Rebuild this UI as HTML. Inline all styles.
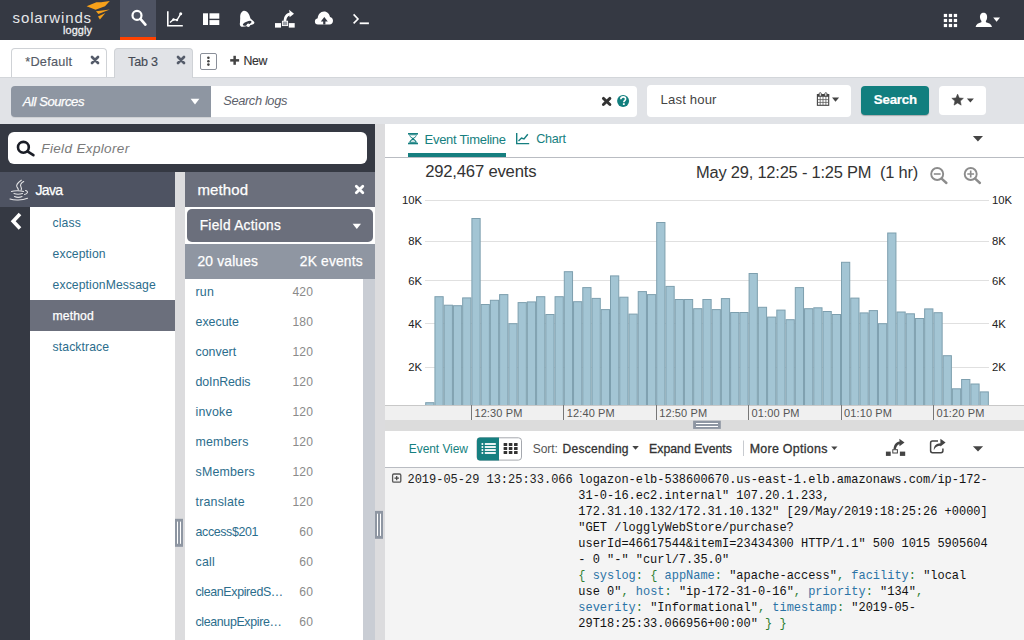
<!DOCTYPE html>
<html><head><meta charset="utf-8">
<style>
*{box-sizing:border-box;margin:0;padding:0}
html,body{width:1024px;height:640px;overflow:hidden;background:#fff;font-family:"Liberation Sans",sans-serif;color:#333}
.a{position:absolute}
.t{position:absolute;white-space:pre;line-height:1}
svg{position:absolute;overflow:visible}
</style></head><body>
<div class="a" style="left:0;top:0;width:1024px;height:40px;background:#353943"></div>
<div class="t" style="left:12.6px;top:9.8px;font-size:15px;color:#e6e7ea;letter-spacing:0.85px">solarwinds</div>
<div class="t" style="left:63px;top:24.5px;font-size:10.9px;color:#eeeff1;letter-spacing:0.1px;-webkit-text-stroke:0.3px #eeeff1">loggly</div>
<div class="a" style="left:120px;top:0;width:36px;height:37px;background:#4e5362"></div>
<div class="a" style="left:120px;top:37px;width:36px;height:3px;background:#ff4200"></div>
<div class="a" style="left:11px;top:48px;width:96px;height:30px;background:#fff;border:1px solid #cfd2d6;border-bottom:none;border-radius:4px 4px 0 0"></div>
<div class="a" style="left:200px;top:53px;width:17px;height:17px;border:1px solid #8a8f99;border-radius:2px;background:#fff"></div>
<div class="a" style="left:0;top:77px;width:1024px;height:47px;background:#e1e3e7;border-top:1px solid #d3d6da"></div>
<div class="a" style="left:114px;top:48px;width:79px;height:30px;background:#e1e3e7;border:1px solid #cfd2d6;border-bottom:none;border-radius:4px 4px 0 0"></div>
<div class="a" style="left:11px;top:85.5px;width:200px;height:31px;background:#8e96a2;border-radius:4px 0 0 4px;box-shadow:0 1px 0 rgba(0,0,0,.08)"></div>
<div class="a" style="left:211px;top:85.5px;width:426px;height:31px;background:#fff;border-radius:0 4px 4px 0"></div>
<div class="a" style="left:647px;top:84.5px;width:204px;height:32px;background:#fff;border-radius:4px"></div>
<div class="a" style="left:861px;top:86px;width:68px;height:29px;background:#127f7f;border-radius:4px;box-shadow:0 1px 1px rgba(0,0,0,.25)"></div>
<div class="a" style="left:939px;top:86px;width:47px;height:29px;background:#fff;border-radius:4px"></div>
<div class="a" style="left:0;top:124px;width:375px;height:516px;background:#353943"></div>
<div class="a" style="left:8px;top:132px;width:359px;height:31.5px;background:#fff;border-radius:6px"></div>
<div class="a" style="left:0;top:172px;width:175px;height:35px;background:#4e5362"></div>
<div class="a" style="left:30px;top:207px;width:145px;height:433px;background:#fff"></div>
<div class="a" style="left:30px;top:300px;width:145px;height:31px;background:#6b6f7c"></div>
<div class="t" style="left:52.6px;top:216.67px;font-size:12.2px;letter-spacing:0.1px;color:#2b6d8c">class</div>
<div class="t" style="left:52.6px;top:247.67px;font-size:12.2px;letter-spacing:0.1px;color:#2b6d8c">exception</div>
<div class="t" style="left:52.6px;top:278.67px;font-size:12.2px;letter-spacing:0.1px;color:#2b6d8c">exceptionMessage</div>
<div class="t" style="left:52.6px;top:309.67px;font-size:12.2px;letter-spacing:0.1px;color:#fff;-webkit-text-stroke:0.25px #fff">method</div>
<div class="t" style="left:52.6px;top:340.67px;font-size:12.2px;letter-spacing:0.1px;color:#2b6d8c">stacktrace</div>
<div class="a" style="left:175px;top:172px;width:10px;height:468px;background:#dcdcde"></div>
<div class="a" style="left:185px;top:172px;width:190px;height:34.5px;background:#6b6f7c"></div>
<div class="a" style="left:185px;top:206.5px;width:190px;height:38px;background:#fff"></div>
<div class="a" style="left:187px;top:209px;width:186px;height:32.8px;background:#6b6f7c;border-radius:5px"></div>
<div class="a" style="left:185px;top:244.3px;width:190px;height:34.3px;background:#8f96a2"></div>
<div class="a" style="left:185px;top:278.6px;width:178px;height:362px;background:#fff"></div>
<div class="a" style="left:363px;top:278.6px;width:12px;height:362px;background:#c9cdd4"></div>
<div class="t" style="left:195.5px;top:286.30px;font-size:12.4px;letter-spacing:0.2px;color:#2b6d8c">run</div>
<div class="t" style="left:253px;width:60px;text-align:right;top:285.66px;font-size:12.1px;letter-spacing:0.1px;color:#8a8a8a">420</div>
<div class="t" style="left:195.5px;top:316.30px;font-size:12.4px;letter-spacing:0.0px;color:#2b6d8c">execute</div>
<div class="t" style="left:253px;width:60px;text-align:right;top:315.66px;font-size:12.1px;letter-spacing:0.1px;color:#8a8a8a">180</div>
<div class="t" style="left:195.5px;top:346.30px;font-size:12.4px;letter-spacing:0.0px;color:#2b6d8c">convert</div>
<div class="t" style="left:253px;width:60px;text-align:right;top:345.66px;font-size:12.1px;letter-spacing:0.1px;color:#8a8a8a">120</div>
<div class="t" style="left:195.5px;top:376.30px;font-size:12.4px;letter-spacing:-0.1px;color:#2b6d8c">doInRedis</div>
<div class="t" style="left:253px;width:60px;text-align:right;top:375.66px;font-size:12.1px;letter-spacing:0.1px;color:#8a8a8a">120</div>
<div class="t" style="left:195.5px;top:406.30px;font-size:12.4px;letter-spacing:0.2px;color:#2b6d8c">invoke</div>
<div class="t" style="left:253px;width:60px;text-align:right;top:405.66px;font-size:12.1px;letter-spacing:0.1px;color:#8a8a8a">120</div>
<div class="t" style="left:195.5px;top:436.30px;font-size:12.4px;letter-spacing:0.2px;color:#2b6d8c">members</div>
<div class="t" style="left:253px;width:60px;text-align:right;top:435.66px;font-size:12.1px;letter-spacing:0.1px;color:#8a8a8a">120</div>
<div class="t" style="left:195.5px;top:466.30px;font-size:12.4px;letter-spacing:0.2px;color:#2b6d8c">sMembers</div>
<div class="t" style="left:253px;width:60px;text-align:right;top:465.66px;font-size:12.1px;letter-spacing:0.1px;color:#8a8a8a">120</div>
<div class="t" style="left:195.5px;top:496.30px;font-size:12.4px;letter-spacing:0.2px;color:#2b6d8c">translate</div>
<div class="t" style="left:253px;width:60px;text-align:right;top:495.66px;font-size:12.1px;letter-spacing:0.1px;color:#8a8a8a">120</div>
<div class="t" style="left:195.5px;top:526.30px;font-size:12.4px;letter-spacing:-0.35px;color:#2b6d8c">access$201</div>
<div class="t" style="left:253px;width:60px;text-align:right;top:525.66px;font-size:12.1px;letter-spacing:0.1px;color:#8a8a8a">60</div>
<div class="t" style="left:195.5px;top:556.30px;font-size:12.4px;letter-spacing:0.2px;color:#2b6d8c">call</div>
<div class="t" style="left:253px;width:60px;text-align:right;top:555.66px;font-size:12.1px;letter-spacing:0.1px;color:#8a8a8a">60</div>
<div class="t" style="left:195.5px;top:586.30px;font-size:12.4px;letter-spacing:-0.35px;color:#2b6d8c">cleanExpiredS…</div>
<div class="t" style="left:253px;width:60px;text-align:right;top:585.66px;font-size:12.1px;letter-spacing:0.1px;color:#8a8a8a">60</div>
<div class="t" style="left:195.5px;top:616.30px;font-size:12.4px;letter-spacing:-0.35px;color:#2b6d8c">cleanupExpire…</div>
<div class="t" style="left:253px;width:60px;text-align:right;top:615.66px;font-size:12.1px;letter-spacing:0.1px;color:#8a8a8a">60</div>
<div class="a" style="left:375px;top:124px;width:10px;height:516px;background:#dcdcde"></div>
<div class="a" style="left:385px;top:124px;width:639px;height:34px;background:#fff;border-bottom:1px solid #b9bcc2"></div>
<div class="a" style="left:408px;top:153px;width:98px;height:4px;background:#167f80"></div>
<div class="a" style="left:385px;top:158px;width:639px;height:247px;background:#fff"></div>
<svg class="a" style="left:0;top:0" width="1024" height="640" viewBox="0 0 1024 640">
<rect x="425" y="200" width="564" height="1" fill="#e0e0e0"/>
<rect x="425" y="241" width="564" height="1" fill="#e0e0e0"/>
<rect x="425" y="280" width="564" height="1" fill="#e0e0e0"/>
<rect x="425" y="323" width="564" height="1" fill="#e0e0e0"/>
<rect x="425" y="367" width="564" height="1" fill="#e0e0e0"/>
<rect x="425.70" y="402.70" width="8.24" height="2.80" fill="#a3c5d4" stroke="#7d9fae" stroke-width="1"/>
<rect x="434.94" y="296.70" width="8.24" height="108.80" fill="#a3c5d4" stroke="#7d9fae" stroke-width="1"/>
<rect x="444.18" y="305.20" width="8.24" height="100.30" fill="#a3c5d4" stroke="#7d9fae" stroke-width="1"/>
<rect x="453.42" y="305.70" width="8.24" height="99.80" fill="#a3c5d4" stroke="#7d9fae" stroke-width="1"/>
<rect x="462.66" y="297.90" width="8.24" height="107.60" fill="#a3c5d4" stroke="#7d9fae" stroke-width="1"/>
<rect x="471.90" y="218.50" width="8.24" height="187.00" fill="#a3c5d4" stroke="#7d9fae" stroke-width="1"/>
<rect x="481.14" y="304.50" width="8.24" height="101.00" fill="#a3c5d4" stroke="#7d9fae" stroke-width="1"/>
<rect x="490.38" y="300.30" width="8.24" height="105.20" fill="#a3c5d4" stroke="#7d9fae" stroke-width="1"/>
<rect x="499.62" y="294.60" width="8.24" height="110.90" fill="#a3c5d4" stroke="#7d9fae" stroke-width="1"/>
<rect x="508.86" y="323.70" width="8.24" height="81.80" fill="#a3c5d4" stroke="#7d9fae" stroke-width="1"/>
<rect x="518.10" y="302.60" width="8.24" height="102.90" fill="#a3c5d4" stroke="#7d9fae" stroke-width="1"/>
<rect x="527.34" y="301.90" width="8.24" height="103.60" fill="#a3c5d4" stroke="#7d9fae" stroke-width="1"/>
<rect x="536.58" y="296.70" width="8.24" height="108.80" fill="#a3c5d4" stroke="#7d9fae" stroke-width="1"/>
<rect x="545.82" y="314.50" width="8.24" height="91.00" fill="#a3c5d4" stroke="#7d9fae" stroke-width="1"/>
<rect x="555.06" y="296.70" width="8.24" height="108.80" fill="#a3c5d4" stroke="#7d9fae" stroke-width="1"/>
<rect x="564.30" y="271.70" width="8.24" height="133.80" fill="#a3c5d4" stroke="#7d9fae" stroke-width="1"/>
<rect x="573.54" y="301.70" width="8.24" height="103.80" fill="#a3c5d4" stroke="#7d9fae" stroke-width="1"/>
<rect x="582.78" y="287.60" width="8.24" height="117.90" fill="#a3c5d4" stroke="#7d9fae" stroke-width="1"/>
<rect x="592.02" y="298.40" width="8.24" height="107.10" fill="#a3c5d4" stroke="#7d9fae" stroke-width="1"/>
<rect x="601.26" y="309.60" width="8.24" height="95.90" fill="#a3c5d4" stroke="#7d9fae" stroke-width="1"/>
<rect x="610.50" y="275.90" width="8.24" height="129.60" fill="#a3c5d4" stroke="#7d9fae" stroke-width="1"/>
<rect x="619.74" y="297.20" width="8.24" height="108.30" fill="#a3c5d4" stroke="#7d9fae" stroke-width="1"/>
<rect x="628.98" y="314.10" width="8.24" height="91.40" fill="#a3c5d4" stroke="#7d9fae" stroke-width="1"/>
<rect x="638.22" y="291.60" width="8.24" height="113.90" fill="#a3c5d4" stroke="#7d9fae" stroke-width="1"/>
<rect x="647.46" y="294.60" width="8.24" height="110.90" fill="#a3c5d4" stroke="#7d9fae" stroke-width="1"/>
<rect x="656.70" y="222.50" width="8.24" height="183.00" fill="#a3c5d4" stroke="#7d9fae" stroke-width="1"/>
<rect x="665.94" y="286.40" width="8.24" height="119.10" fill="#a3c5d4" stroke="#7d9fae" stroke-width="1"/>
<rect x="675.18" y="299.50" width="8.24" height="106.00" fill="#a3c5d4" stroke="#7d9fae" stroke-width="1"/>
<rect x="684.42" y="299.50" width="8.24" height="106.00" fill="#a3c5d4" stroke="#7d9fae" stroke-width="1"/>
<rect x="693.66" y="308.70" width="8.24" height="96.80" fill="#a3c5d4" stroke="#7d9fae" stroke-width="1"/>
<rect x="702.90" y="299.50" width="8.24" height="106.00" fill="#a3c5d4" stroke="#7d9fae" stroke-width="1"/>
<rect x="712.14" y="309.60" width="8.24" height="95.90" fill="#a3c5d4" stroke="#7d9fae" stroke-width="1"/>
<rect x="721.38" y="298.60" width="8.24" height="106.90" fill="#a3c5d4" stroke="#7d9fae" stroke-width="1"/>
<rect x="730.62" y="312.50" width="8.24" height="93.00" fill="#a3c5d4" stroke="#7d9fae" stroke-width="1"/>
<rect x="739.86" y="312.50" width="8.24" height="93.00" fill="#a3c5d4" stroke="#7d9fae" stroke-width="1"/>
<rect x="749.10" y="273.50" width="8.24" height="132.00" fill="#a3c5d4" stroke="#7d9fae" stroke-width="1"/>
<rect x="758.34" y="307.30" width="8.24" height="98.20" fill="#a3c5d4" stroke="#7d9fae" stroke-width="1"/>
<rect x="767.58" y="317.10" width="8.24" height="88.40" fill="#a3c5d4" stroke="#7d9fae" stroke-width="1"/>
<rect x="776.82" y="310.10" width="8.24" height="95.40" fill="#a3c5d4" stroke="#7d9fae" stroke-width="1"/>
<rect x="786.06" y="319.70" width="8.24" height="85.80" fill="#a3c5d4" stroke="#7d9fae" stroke-width="1"/>
<rect x="795.30" y="287.60" width="8.24" height="117.90" fill="#a3c5d4" stroke="#7d9fae" stroke-width="1"/>
<rect x="804.54" y="308.70" width="8.24" height="96.80" fill="#a3c5d4" stroke="#7d9fae" stroke-width="1"/>
<rect x="813.78" y="307.80" width="8.24" height="97.70" fill="#a3c5d4" stroke="#7d9fae" stroke-width="1"/>
<rect x="823.02" y="311.50" width="8.24" height="94.00" fill="#a3c5d4" stroke="#7d9fae" stroke-width="1"/>
<rect x="832.26" y="314.50" width="8.24" height="91.00" fill="#a3c5d4" stroke="#7d9fae" stroke-width="1"/>
<rect x="841.50" y="262.30" width="8.24" height="143.20" fill="#a3c5d4" stroke="#7d9fae" stroke-width="1"/>
<rect x="850.74" y="298.10" width="8.24" height="107.40" fill="#a3c5d4" stroke="#7d9fae" stroke-width="1"/>
<rect x="859.98" y="312.90" width="8.24" height="92.60" fill="#a3c5d4" stroke="#7d9fae" stroke-width="1"/>
<rect x="869.22" y="310.60" width="8.24" height="94.90" fill="#a3c5d4" stroke="#7d9fae" stroke-width="1"/>
<rect x="878.46" y="323.70" width="8.24" height="81.80" fill="#a3c5d4" stroke="#7d9fae" stroke-width="1"/>
<rect x="887.70" y="233.00" width="8.24" height="172.50" fill="#a3c5d4" stroke="#7d9fae" stroke-width="1"/>
<rect x="896.94" y="312.00" width="8.24" height="93.50" fill="#a3c5d4" stroke="#7d9fae" stroke-width="1"/>
<rect x="906.18" y="313.80" width="8.24" height="91.70" fill="#a3c5d4" stroke="#7d9fae" stroke-width="1"/>
<rect x="915.42" y="318.50" width="8.24" height="87.00" fill="#a3c5d4" stroke="#7d9fae" stroke-width="1"/>
<rect x="924.66" y="308.90" width="8.24" height="96.60" fill="#a3c5d4" stroke="#7d9fae" stroke-width="1"/>
<rect x="933.90" y="312.70" width="8.24" height="92.80" fill="#a3c5d4" stroke="#7d9fae" stroke-width="1"/>
<rect x="943.14" y="355.70" width="8.24" height="49.80" fill="#a3c5d4" stroke="#7d9fae" stroke-width="1"/>
<rect x="952.38" y="388.80" width="8.24" height="16.70" fill="#a3c5d4" stroke="#7d9fae" stroke-width="1"/>
<rect x="961.62" y="379.50" width="8.24" height="26.00" fill="#a3c5d4" stroke="#7d9fae" stroke-width="1"/>
<rect x="970.86" y="384.00" width="8.24" height="21.50" fill="#a3c5d4" stroke="#7d9fae" stroke-width="1"/>
<rect x="980.10" y="391.90" width="8.24" height="13.60" fill="#a3c5d4" stroke="#7d9fae" stroke-width="1"/>
</svg>
<div class="t" style="left:372px;width:50px;text-align:right;top:194.7px;font-size:11.3px;color:#222">10K</div>
<div class="t" style="left:992px;top:194.7px;font-size:11.3px;color:#222">10K</div>
<div class="t" style="left:372px;width:50px;text-align:right;top:235.7px;font-size:11.3px;color:#222">8K</div>
<div class="t" style="left:992px;top:235.7px;font-size:11.3px;color:#222">8K</div>
<div class="t" style="left:372px;width:50px;text-align:right;top:275.7px;font-size:11.3px;color:#222">6K</div>
<div class="t" style="left:992px;top:275.7px;font-size:11.3px;color:#222">6K</div>
<div class="t" style="left:372px;width:50px;text-align:right;top:318.7px;font-size:11.3px;color:#222">4K</div>
<div class="t" style="left:992px;top:318.7px;font-size:11.3px;color:#222">4K</div>
<div class="t" style="left:372px;width:50px;text-align:right;top:361.7px;font-size:11.3px;color:#222">2K</div>
<div class="t" style="left:992px;top:361.7px;font-size:11.3px;color:#222">2K</div>
<div class="a" style="left:385px;top:405px;width:639px;height:15px;background:#f0f0f0;border-top:1px solid #c8c8c8"></div>
<div class="a" style="left:470.9px;top:405px;width:1px;height:15px;background:#777"></div>
<div class="t" style="left:474.4px;top:408px;font-size:11px;color:#555;letter-spacing:0.12px">12:30 PM</div>
<div class="a" style="left:563.3px;top:405px;width:1px;height:15px;background:#777"></div>
<div class="t" style="left:566.8px;top:408px;font-size:11px;color:#555;letter-spacing:0.12px">12:40 PM</div>
<div class="a" style="left:655.7px;top:405px;width:1px;height:15px;background:#777"></div>
<div class="t" style="left:659.2px;top:408px;font-size:11px;color:#555;letter-spacing:0.12px">12:50 PM</div>
<div class="a" style="left:748.1px;top:405px;width:1px;height:15px;background:#777"></div>
<div class="t" style="left:751.6px;top:408px;font-size:11px;color:#555;letter-spacing:0.12px">01:00 PM</div>
<div class="a" style="left:840.5px;top:405px;width:1px;height:15px;background:#777"></div>
<div class="t" style="left:844.0px;top:408px;font-size:11px;color:#555;letter-spacing:0.12px">01:10 PM</div>
<div class="a" style="left:932.9px;top:405px;width:1px;height:15px;background:#777"></div>
<div class="t" style="left:936.4px;top:408px;font-size:11px;color:#555;letter-spacing:0.12px">01:20 PM</div>
<div class="a" style="left:385px;top:420px;width:639px;height:11px;background:#dcdcdc"></div>
<div class="a" style="left:385px;top:431px;width:639px;height:37px;background:#fff;border-bottom:1px solid #b9bcc2"></div>
<div class="a" style="left:385px;top:468px;width:639px;height:172px;background:#f4f4f4"></div>
<div class="t" style="left:25.3px;top:55.93px;font-size:12.72px;letter-spacing:0.220px;color:#555a66;-webkit-text-stroke:0.15px #555a66">*Default</div>
<div class="t" style="left:128.1px;top:56.16px;font-size:12.57px;letter-spacing:-0.188px;color:#444a55;-webkit-text-stroke:0.15px #444a55">Tab 3</div>
<div class="t" style="left:243.4px;top:55.40px;font-size:12.29px;letter-spacing:-0.344px;color:#333;-webkit-text-stroke:0.15px #333">New</div>
<div class="t" style="left:22.8px;top:94.73px;font-size:13.08px;letter-spacing:-0.447px;font-style:italic;color:#fff;-webkit-text-stroke:0.25px #fff">All Sources</div>
<div class="t" style="left:223.2px;top:94.62px;font-size:12.85px;letter-spacing:-0.367px;font-style:italic;color:#5d616b">Search logs</div>
<div class="t" style="left:660.5px;top:92.79px;font-size:13.13px;letter-spacing:0.158px;color:#444">Last hour</div>
<div class="t" style="left:873.8px;top:92.97px;font-size:13.26px;letter-spacing:-0.189px;font-weight:bold;color:#fff;-webkit-text-stroke:0.2px #fff">Search</div>
<div class="t" style="left:41.3px;top:142.13px;font-size:13.55px;letter-spacing:0.333px;font-style:italic;color:#7a7a7a">Field Explorer</div>
<div class="t" style="left:35.4px;top:182.90px;font-size:14.05px;letter-spacing:-0.628px;color:#fff;-webkit-text-stroke:0.25px #fff">Java</div>
<div class="t" style="left:197.5px;top:182.04px;font-size:15.02px;letter-spacing:0.100px;color:#fff;-webkit-text-stroke:0.25px #fff">method</div>
<div class="t" style="left:199.7px;top:219.08px;font-size:13.73px;letter-spacing:0.282px;color:#fff;-webkit-text-stroke:0.25px #fff">Field Actions</div>
<div class="t" style="left:197.5px;top:255.21px;font-size:13.81px;letter-spacing:0.175px;color:#fff;-webkit-text-stroke:0.25px #fff">20 values</div>
<div class="t" style="left:299.8px;top:255.21px;font-size:13.81px;letter-spacing:0.185px;color:#fff;-webkit-text-stroke:0.25px #fff">2K events</div>
<div class="t" style="left:424.6px;top:133.00px;font-size:12.99px;letter-spacing:-0.291px;color:#167f80">Event Timeline</div>
<div class="t" style="left:536.2px;top:133.34px;font-size:12.59px;letter-spacing:-0.245px;color:#167f80">Chart</div>
<div class="t" style="left:425.2px;top:163.80px;font-size:16.66px;letter-spacing:-0.201px;color:#333">292,467 events</div>
<div class="t" style="left:696.0px;top:164.37px;font-size:16.46px;letter-spacing:-0.204px;color:#333">May 29, 12:25 - 1:25 PM  (1 hr)</div>
<div class="t" style="left:408.8px;top:442.63px;font-size:12.01px;letter-spacing:-0.069px;color:#167f80">Event View</div>
<div class="t" style="left:532.7px;top:442.83px;font-size:12.01px;letter-spacing:-0.042px;color:#555">Sort:</div>
<div class="t" style="left:562.6px;top:442.83px;font-size:12.01px;letter-spacing:0.285px;color:#333;-webkit-text-stroke:0.3px #333">Descending</div>
<div class="t" style="left:649.0px;top:442.60px;font-size:12.29px;letter-spacing:0.027px;color:#333;-webkit-text-stroke:0.3px #333">Expand Events</div>
<div class="t" style="left:749.7px;top:442.98px;font-size:12.43px;letter-spacing:0.281px;color:#333;-webkit-text-stroke:0.3px #333">More Options</div>
<div class="t" style="left:407.5px;top:471.5px;font-family:'Liberation Mono',monospace;font-size:11.97px;line-height:16px;color:#222">2019-05-29 13:25:33.066</div>
<div class="a" style="left:578.3px;top:471.5px;white-space:pre;font-family:'Liberation Mono',monospace;font-size:11.97px;line-height:16px;color:#111">logazon-elb-538600670.us-east-1.elb.amazonaws.com/ip-172-
31-0-16.ec2.internal" 107.20.1.233,
172.31.10.132/172.31.10.132" [29/May/2019:18:25:26 +0000]
"GET /logglyWebStore/purchase?
userId=46617544&amp;itemI=23434300 HTTP/1.1" 500 1015 5905604
- 0 "-" "curl/7.35.0"
<span style="color:#2f7f33">{ </span><span style="color:#2b73a6">syslog</span><span style="color:#2f7f33">: { </span><span style="color:#2b73a6">appName</span><span style="color:#2f7f33">: </span>"apache-access"<span style="color:#2f7f33">, </span><span style="color:#2b73a6">facility</span><span style="color:#2f7f33">: </span>"local
use 0"<span style="color:#2f7f33">, </span><span style="color:#2b73a6">host</span><span style="color:#2f7f33">: </span>"ip-172-31-0-16"<span style="color:#2f7f33">, </span><span style="color:#2b73a6">priority</span><span style="color:#2f7f33">: </span>"134"<span style="color:#2f7f33">,</span>
<span style="color:#2b73a6">severity</span><span style="color:#2f7f33">: </span>"Informational"<span style="color:#2f7f33">, </span><span style="color:#2b73a6">timestamp</span><span style="color:#2f7f33">: </span>"2019-05-
29T18:25:33.066956+00:00" <span style="color:#2f7f33">} }</span></div>
<!--ICONS-->
<svg class="a" style="left:0;top:0;pointer-events:none" width="1024" height="640" viewBox="0 0 1024 640">
<!-- logo flame -->
<g fill="#f7a11a">
<path d="M86.6 6.3 L96.4 2.3 L101 2.2 L109.8 1.1 L105 6.3 L95.6 9.8 Z"/>
<path d="M96 11.3 L109.8 9.4 L98.4 14.1 Z"/>
<path d="M98 16.4 L105.4 12.9 L99.9 19.5 Z"/>
</g>
<!-- nav icons -->
<g fill="none" stroke="#fff">
<circle cx="137" cy="15.4" r="4.5" stroke-width="2.2"/>
<path d="M140.4 18.9 L145.4 24.6" stroke-width="2.7" stroke-linecap="round"/>
<path d="M167.8 11.3 V25.8 H182.8" stroke-width="1.6"/>
<path d="M170 22.5 L173.5 19.5 L177 20 L180.7 13.8" stroke-width="1.4"/>
</g>
<g fill="#fff">
<circle cx="173.5" cy="19.5" r="1.2"/><circle cx="177" cy="20" r="1.2"/><circle cx="180.7" cy="13.8" r="1.5"/>
<rect x="203" y="13.3" width="5" height="11.7"/>
<rect x="209.5" y="13.3" width="9.8" height="5.4"/>
<rect x="209.5" y="20.1" width="9.8" height="4.9"/>
<!-- bell -->
<path d="M244 10.8 C241 11.5 240 14.5 240.2 18 L240 22.5 C239.5 24.5 240 26.8 242.5 26.8 C245 26.8 250 25.5 252.5 24.5 C254.5 23.8 255 22.5 253.8 21.5 L250.5 18.5 C249.3 14.5 248 11 244 10.8 Z"/>
<!-- pipeline -->
<rect x="275" y="23.1" width="6" height="4.5"/>
<rect x="288.8" y="23.1" width="5.9" height="4.5"/>
<path d="M283.6 21 C284 16 286 13.5 289.6 12.6 L289 9.8 L294 13.8 L289.6 17.2 L289.5 15.6 C287.5 16.3 286.5 18.2 286.2 21 Z"/>
<!-- cloud -->
<path d="M318 24.5 C315.8 24.5 314.9 23 314.9 21.4 C314.9 19.8 316 18.6 317.7 18.3 C317.9 14.8 320.5 11.5 324 11.5 C327.3 11.5 329.6 14 330 17 C331.9 17.2 333 18.8 333 20.8 C333 23 331.5 24.5 329.5 24.5 Z"/>
<!-- terminal -->
<rect x="359.7" y="22.4" width="9.2" height="1.8"/>
</g>
<rect x="282.4" y="21.2" width="5.2" height="4.4" fill="#9ca0a8" stroke="#fff" stroke-width="0.9"/>
<path d="M320.8 21.4 L324.3 17 L327.8 21.4 H325.4 V24.6 H323.2 V21.4 Z" fill="#353943"/>
<path d="M353.6 14.4 L358 19 L353.6 23.4" fill="none" stroke="#fff" stroke-width="1.6"/>
<ellipse cx="247.2" cy="23.3" rx="4.6" ry="1.7" transform="rotate(-22 247.2 23.3)" fill="#353943"/>
<circle cx="248.3" cy="25.3" r="1.7" fill="#fff"/>
<!-- right nav -->
<g fill="#fff">
<rect x="943.8" y="13.9" width="3.3" height="3.2"/><rect x="948.8" y="13.9" width="3.3" height="3.2"/><rect x="953.8" y="13.9" width="3.3" height="3.2"/>
<rect x="943.8" y="18.9" width="3.3" height="3.2"/><rect x="948.8" y="18.9" width="3.3" height="3.2"/><rect x="953.8" y="18.9" width="3.3" height="3.2"/>
<rect x="943.8" y="23.9" width="3.3" height="3.2"/><rect x="948.8" y="23.9" width="3.3" height="3.2"/><rect x="953.8" y="23.9" width="3.3" height="3.2"/>
<path d="M983.5 12.7 C980.8 12.7 979.8 15 980 17.5 C980.2 19.3 981 20.5 981.5 21 L981.3 22.2 C978.5 23 976 24 975.6 27 H992 C991.5 24 989 23 986 22.2 L985.8 21 C986.4 20.4 987 19.2 987.1 17.5 C987.3 15 986.3 12.7 983.5 12.7 Z"/>
<path d="M993.2 17.6 H1000 L996.6 21.8 Z"/>
</g>
<!-- tabs row -->
<g stroke="#555c6a" stroke-width="2.7" stroke-linecap="round">
<path d="M92 57 L98 63 M98 57 L92 63"/>
<path d="M178 57 L184 63 M184 57 L178 63"/>
</g>
<g fill="#444">
<circle cx="208.4" cy="57.8" r="1.3"/><circle cx="208.4" cy="61.2" r="1.3"/><circle cx="208.4" cy="64.6" r="1.3"/>
<rect x="230.2" y="59.1" width="8.9" height="2.5"/><rect x="233.4" y="55.8" width="2.5" height="9"/>
</g>
<!-- search band -->
<path d="M190.6 98.8 H199.4 L195 104.4 Z" fill="#fff"/>
<g stroke="#333" stroke-width="2.9" stroke-linecap="round"><path d="M603.4 98.4 L609.9 104.5 M609.9 98.4 L603.4 104.5"/></g>
<circle cx="623.1" cy="100.9" r="6" fill="#127f7e"/>
<path d="M620.8 99.3 C620.8 97.5 622 96.9 623.2 96.9 C624.6 96.9 625.6 97.7 625.6 99 C625.6 100.5 623.8 100.6 623.8 102.2" fill="none" stroke="#fff" stroke-width="1.6"/>
<rect x="622.9" y="103.2" width="1.8" height="1.8" fill="#fff"/>
<!-- calendar -->
<rect x="817.4" y="94.6" width="11.3" height="10.7" fill="#fff" stroke="#444" stroke-width="1.1"/>
<rect x="817" y="94.2" width="12.1" height="2.6" fill="#444"/>
<g stroke="#555" stroke-width="0.75"><path d="M820.2 96.8 V105.2 M823 96.8 V105.2 M825.9 96.8 V105.2 M817.4 99.6 H828.7 M817.4 102.4 H828.7"/></g>
<rect x="819.2" y="92.7" width="2.1" height="3.6" rx="1" fill="#fff" stroke="#444" stroke-width="0.9"/>
<rect x="824.8" y="92.7" width="2.1" height="3.6" rx="1" fill="#fff" stroke="#444" stroke-width="0.9"/>
<path d="M832 97.4 H839.1 L835.5 101.7 Z" fill="#444"/>
<!-- star -->
<path d="M957.60 94.10 L959.29 97.88 L963.40 98.31 L960.33 101.09 L961.19 105.14 L957.60 103.07 L954.01 105.14 L954.87 101.09 L951.80 98.31 L955.91 97.88 Z" fill="#444" stroke="#444" stroke-width="0.5" stroke-linejoin="round"/>
<path d="M966.9 98.5 H973.9 L970.4 102.4 Z" fill="#444"/>
<!-- field explorer search -->
<circle cx="23.4" cy="147.3" r="5.4" fill="none" stroke="#1a1d26" stroke-width="2.6"/>
<path d="M27.5 151.3 L33.4 155.2" stroke="#1a1d26" stroke-width="2.6" stroke-linecap="round"/>
<!-- java icon -->
<g fill="none" stroke="#e2e2e4" stroke-width="1.1" stroke-linecap="round">
<path d="M21.3 180.2 C18 182.5 15.5 184.5 17 187 C18 188.5 18.5 189 18.3 190"/>
<path d="M23.7 181.5 C21 183 19.8 185 21 187 C21.6 188 21.6 189 21.2 190"/>
<path d="M11.5 191.5 C14 190.5 21 190.7 23.5 191.5"/>
<path d="M14 193.5 C16 194.3 20 194.3 22.5 193.5"/>
<path d="M14.5 196.5 C16.5 197.4 20 197.4 22 196.5"/>
<path d="M25.5 190.5 C28.5 191 28 194 24.5 194.5"/>
<path d="M10 199 C14 200.5 22 200.5 27.5 198.3"/>
</g>
<path d="M20 214 L13.2 221.3 L20 228.6" fill="none" stroke="#fff" stroke-width="3.6"/>
<!-- method header x & field actions caret -->
<g stroke="#fff" stroke-width="2.8" stroke-linecap="round"><path d="M356.3 186.3 L362.8 192.8 M362.8 186.3 L356.3 192.8"/></g>
<path d="M352.6 223.8 H361 L356.8 228.9 Z" fill="#fff"/>
<!-- splitter handles -->
<rect x="175" y="518.8" width="8" height="28" fill="#8e96a2"/>
<path d="M177.5 521.6 V543.8 M180.5 521.6 V543.8" stroke="#fff" stroke-width="1"/>
<rect x="375" y="510.9" width="8" height="27.9" fill="#8e96a2"/>
<path d="M377.5 513.7 V535.9 M380.5 513.7 V535.9" stroke="#fff" stroke-width="1"/>
<!-- timeline tab icons -->
<g fill="#167f80">
<rect x="408" y="133" width="10" height="1.6"/><rect x="408" y="142.7" width="10" height="1.6"/>
<path d="M409.2 134.5 H416.8 C416.8 137 414.5 138 413.8 138.7 C414.5 139.3 416.8 140.5 416.8 142.8 H409.2 C409.2 140.5 411.5 139.3 412.2 138.7 C411.5 138 409.2 137 409.2 134.5 Z M410.6 141.8 H415.4 C415 140.8 413.5 140 413 140 C412.5 140 411 140.8 410.6 141.8 Z"/>
</g>
<path d="M409.9 135.2 H416.1 C415.6 136.6 414 137.3 413 137.9 C412 137.3 410.4 136.6 409.9 135.2 Z" fill="#fff"/>
<path d="M516.7 133 V143.6 H529.2" fill="none" stroke="#167f80" stroke-width="1.4"/>
<path d="M518.5 141 L521.5 138 L524 139 L527.8 134.2" fill="none" stroke="#167f80" stroke-width="1.4"/>
<path d="M972.9 136 H983 L977.9 141.4 Z" fill="#444"/>
<!-- zoom icons -->
<g fill="none" stroke="#8c8c8c" stroke-width="1.9">
<circle cx="937.2" cy="174" r="6"/><path d="M941.6 178.6 L946.4 183" stroke-width="2.4" stroke-linecap="round"/><path d="M933.8 174 H940.6" stroke-width="1.6"/>
<circle cx="970.7" cy="174" r="6"/><path d="M975.1 178.6 L979.9 183" stroke-width="2.4" stroke-linecap="round"/><path d="M967.3 174 H974.1 M970.7 170.6 V177.4" stroke-width="1.6"/>
</g>
<!-- navigator handle -->
<rect x="693.1" y="420.7" width="27.7" height="8.2" fill="#8e96a2"/>
<path d="M696 423.5 H718 M696 426.5 H718" stroke="#fff" stroke-width="1"/>
<!-- button group -->
<rect x="477" y="437.8" width="44.5" height="22.3" rx="3" fill="#fff" stroke="#a5a8ae" stroke-width="1"/>
<path d="M480 437.5 H499 V460.4 H480 A3 3 0 0 1 477 457.4 V440.5 A3 3 0 0 1 480 437.5 Z" fill="#167f80"/>
<g fill="#fff">
<circle cx="482.4" cy="444" r="1"/><circle cx="482.4" cy="447" r="1"/><circle cx="482.4" cy="450" r="1"/><circle cx="482.4" cy="453" r="1"/>
<rect x="484.8" y="443.1" width="11" height="1.8"/><rect x="484.8" y="446.1" width="11" height="1.8"/><rect x="484.8" y="449.1" width="11" height="1.8"/><rect x="484.8" y="452.1" width="11" height="1.8"/>
</g>
<g fill="#333">
<rect x="503.6" y="443" width="3.6" height="2.9" rx="0.5"/><rect x="508.8" y="443" width="3.6" height="2.9" rx="0.5"/><rect x="514" y="443" width="3.6" height="2.9" rx="0.5"/>
<rect x="503.6" y="447" width="3.6" height="2.9" rx="0.5"/><rect x="508.8" y="447" width="3.6" height="2.9" rx="0.5"/><rect x="514" y="447" width="3.6" height="2.9" rx="0.5"/>
<rect x="503.6" y="451" width="3.6" height="2.9" rx="0.5"/><rect x="508.8" y="451" width="3.6" height="2.9" rx="0.5"/><rect x="514" y="451" width="3.6" height="2.9" rx="0.5"/>
</g>
<path d="M632.3 446 H638.8 L635.55 449.8 Z" fill="#444"/>
<rect x="743" y="440.5" width="1" height="15.5" fill="#c8cbd0"/>
<path d="M831.2 446.4 H837.5 L834.35 450 Z" fill="#444"/>
<!-- toolbar right icons -->
<g fill="#444">
<rect x="885.9" y="451.6" width="4.8" height="4.3"/><rect x="899.9" y="451.6" width="5.3" height="4.3"/>
<path d="M893.5 449.2 C894 444.5 896 442.2 899.6 441.6 L899.3 438.7 L904.5 442.4 L899.5 446.2 L899.4 444.2 C897.4 444.7 896.3 446.5 895.8 449.2 Z"/>
</g>
<rect x="892.8" y="449.7" width="4.6" height="3.3" fill="#fff" stroke="#444" stroke-width="1"/>
<path d="M938 441 H932.5 C931.3 441 930.6 441.7 930.6 442.9 V450.8 C930.6 452 931.3 452.7 932.5 452.7 H941 C942.2 452.7 942.9 452 942.9 450.8 V448.5" fill="none" stroke="#444" stroke-width="1.5"/>
<path d="M933.8 450.2 C933.8 445.3 936.5 443.5 940.4 443.3 L940.4 438.8 L945.6 442.6 L940.4 446.4 L940.4 445.8 C937.5 445.8 935.4 447 933.8 450.2 Z" fill="#444"/>
<path d="M972.9 446.2 H983.1 L978 451.6 Z" fill="#444"/>
<!-- expand icon -->
<rect x="392.6" y="474" width="8.2" height="8.2" rx="1.3" fill="none" stroke="#555" stroke-width="1.3"/>
<path d="M394.5 478.1 H398.9 M396.7 475.9 V480.3" stroke="#444" stroke-width="1.2"/>
</svg>
<!--/ICONS-->
</body></html>
